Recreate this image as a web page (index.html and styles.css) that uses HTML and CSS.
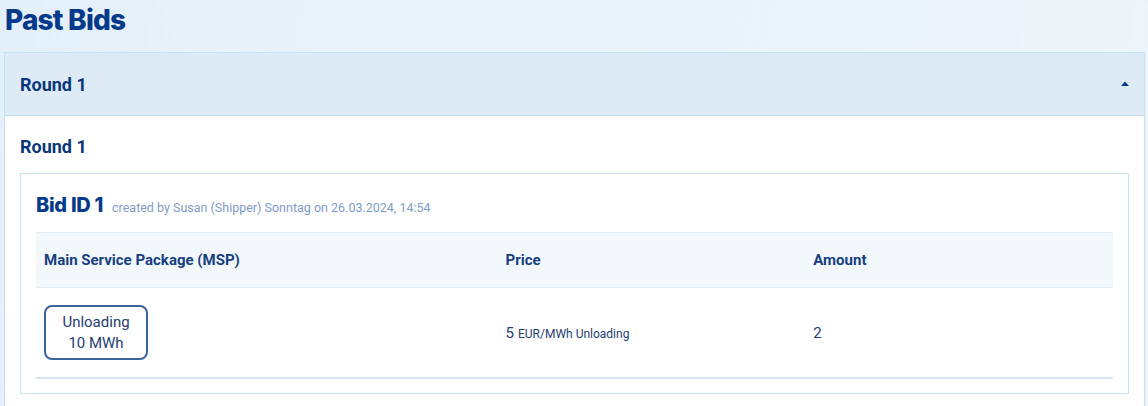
FILE: index.html
```html
<!DOCTYPE html>
<html lang="en">
<head>
<meta charset="utf-8">
<title>Past Bids</title>
<link rel="stylesheet" href="styles.css">
</head>
<body>
<h1 class="page-title">Past Bids</h1>
<section class="panel">
  <header class="panel-header">
    <span class="panel-title">Round 1</span>
    <svg class="caret" width="8" height="5" viewBox="0 0 8 5"><path d="M0 5 L4 0.5 L8 5 Z" fill="#0b3b86"/></svg>
  </header>
  <div class="panel-body">
    <h3 class="round-title">Round 1</h3>
    <div class="bid-card">
      <div class="bid-head">
        <span class="bid-id">Bid ID 1</span>
        <span class="bid-meta">created by Susan (Shipper) Sonntag on 26.03.2024, 14:54</span>
      </div>
      <div class="bid-table">
        <div class="row head-row">
          <div class="cell">Main Service Package (MSP)</div>
          <div class="cell">Price</div>
          <div class="cell">Amount</div>
        </div>
        <div class="row body-row">
          <div class="cell"><span class="badge">Unloading<br>10 MWh</span></div>
          <div class="cell"><span class="num">5</span> <span class="unit">EUR/MWh Unloading</span></div>
          <div class="cell"><span class="num">2</span></div>
        </div>
      </div>
    </div>
  </div>
</section>
</body>
</html>
```

FILE: styles.css
```css
html { overflow: hidden; }
body {
  margin: 0;
  padding: 2px 3px 0 4px;
  min-height: 406px;
  box-sizing: border-box;
  background: linear-gradient(100deg, #e4f0f9 0%, #eaf3fa 55%, #eef5fb 100%);
  font-family: Roboto, "Liberation Sans", sans-serif;
  color: #1d3c72;
}
.page-title {
  margin: 0 0 14px 1px;
  font-family: Inter, "Open Sans", sans-serif;
  font-weight: 800;
  font-size: 28px;
  line-height: 36px;
  color: #053a8b;
  letter-spacing: -0.8px;
}
.panel {
  border: 1px solid #c3e1f2;
  background: #fff;
}
.panel-header {
  height: 62px;
  display: flex;
  align-items: center;
  justify-content: space-between;
  padding: 0 15px 0 15px;
  background: #ddebf7;
  border-bottom: 1px solid #c3e1f2;
}
.panel-title {
  font-size: 18px;
  font-weight: 700;
  color: #0b3679;
}
.caret { margin-top: -1px; }
.panel-body {
  padding: 19px 15px 15px 15px;
}
.round-title {
  margin: 0 0 14px 0;
  font-size: 18px;
  line-height: 24px;
  font-weight: 700;
  color: #0b3679;
}
.bid-card {
  border: 1px solid #c8e3f1;
  padding: 17px 15px 14px 15px;
}
.bid-head {
  display: flex;
  align-items: baseline;
  gap: 9px;
  line-height: 28px;
  margin-bottom: 10px;
}
.bid-id {
  font-family: Inter, "Open Sans", sans-serif;
  font-weight: 800;
  font-size: 20px;
  color: #053a8b;
  letter-spacing: -0.3px;
}
.bid-meta {
  font-size: 12.5px;
  color: #7f9bc6;
}
.bid-table {
  border-top: 1px solid #e2eef7;
  border-bottom: 2px solid #d6e7f3;
}
.row {
  display: grid;
  grid-template-columns: 3fr 2fr 2fr;
  align-items: center;
}
.head-row {
  height: 54px;
  background: #f3f8fc;
  border-bottom: 1px solid #e2eef7;
}
.head-row .cell {
  font-size: 15px;
  font-weight: 700;
  color: #173f80;
}
.body-row { height: 89px; }
.cell { padding: 0 8px; }
.badge {
  display: inline-block;
  box-sizing: border-box;
  width: 104px;
  height: 55px;
  padding-top: 5px;
  border: 2px solid #3a64a0;
  border-radius: 8px;
  text-align: center;
  font-size: 15px;
  line-height: 21px;
  color: #1f3d70;
}
.num { font-size: 15px; color: #1f3d70; }
.unit { font-size: 12px; color: #1f3d70; }
```
